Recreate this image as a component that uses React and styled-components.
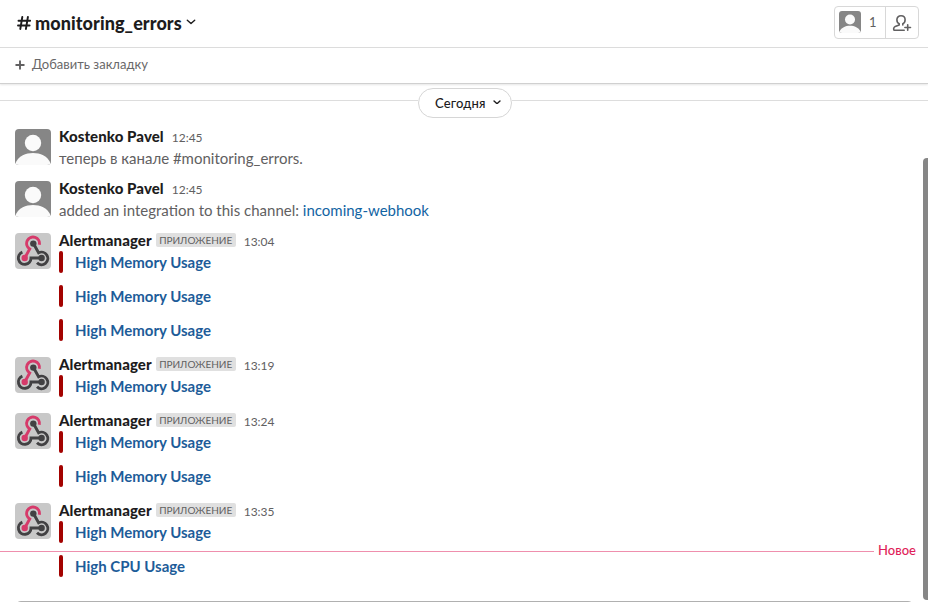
import React from "react";
import styled, { createGlobalStyle } from "styled-components";

const Global = createGlobalStyle`
  * { box-sizing: border-box; }
  body { margin: 0; background: #fff; overflow: hidden; }
`;

const Channel = styled.div`
  position: relative;
  display: flex;
  flex-direction: column;
  width: 928px;
  height: 602px;
  overflow: hidden;
  background: #fff;
  color: #1d1c1d;
  font: 15px/22px Lato, "Noto Sans", sans-serif;
`;

const Header = styled.header`
  display: flex;
  align-items: center;
  justify-content: space-between;
  flex: none;
  height: 48px;
  padding: 0 9px 2px 17px;
  border-bottom: 1px solid #dddddd;
`;

const Title = styled.h1`
  display: flex;
  align-items: center;
  margin: 0;
  font-size: 18px;
  line-height: 24px;
  font-weight: 900;
  letter-spacing: 0.08px;

  .hash { margin-right: 4px; }
  .caret { margin: 0 0 1px 4px; }
`;

const Members = styled.div`
  display: flex;
  width: 85px;
  height: 33px;
  border: 1px solid #d8d8d8;
  border-radius: 4px;
`;

const MemberCount = styled.button`
  display: flex;
  align-items: center;
  width: 51px;
  padding: 0 0 2px 4px;
  gap: 8px;
  border: 0;
  border-right: 1px solid #d8d8d8;
  background: none;
  color: #616061;
  font: 13px/20px Lato, sans-serif;
`;

const AddMember = styled.button`
  display: flex;
  align-items: center;
  justify-content: center;
  flex: 1;
  padding: 0;
  border: 0;
  background: none;
`;

const Bookmarks = styled.div`
  display: flex;
  align-items: center;
  flex: none;
  height: 36px;
  padding: 0 15px 3px;
  gap: 7px;
  border-bottom: 1px solid #d0d0d0;
  box-shadow: 0 1px 2px rgba(0, 0, 0, 0.1);
  color: #696869;
  font-size: 13px;

  svg { margin-top: 2px; }
`;

const DayDivider = styled.div`
  display: flex;
  align-items: center;
  flex: none;
  height: 30px;
  margin-top: 4px;

  &::before, &::after {
    content: "";
    flex: 1;
    height: 1px;
    margin-bottom: 5px;
    background: #dddddd;
  }
  &::before { flex: 0 0 418px; }
`;

const DayPill = styled.button`
  display: flex;
  align-items: center;
  width: 94px;
  height: 30px;
  padding: 0 0 0 16px;
  border: 1px solid #d6d6d6;
  border-radius: 15px;
  background: #fff;
  color: #1d1c1d;
  font: 500 13px/20px Lato, sans-serif;
  letter-spacing: 0.15px;

  svg { margin: 0 10px 2px auto; }
`;

const Messages = styled.main`
  padding: 7px 15px 0;
`;

const Row = styled.article`
  display: flex;
  gap: 8px;
  margin-bottom: ${(p) => (p.$alerts ? 0 : 8)}px;
`;

const Avatar = styled.svg`
  flex: none;
  display: block;
  width: ${(p) => p.$size || 36}px;
  height: ${(p) => p.$size || 36}px;
  margin-top: ${(p) => (p.$size ? 0 : 4)}px;
  border-radius: ${(p) => (p.$size ? 3 : 4)}px;
`;

const Content = styled.div`
  min-width: 0;
`;

const Meta = styled.div`
  display: flex;
  align-items: baseline;
  height: 22px;
`;

const Name = styled.span`
  font-weight: 900;
  letter-spacing: 0.08px;
`;

const AppBadge = styled.span`
  align-self: flex-start;
  width: 80px;
  height: 14px;
  margin: 4px 0 0 4px;
  border-radius: 2px;
  background: #e0e0e0;
  color: #616061;
  font-size: 10px;
  line-height: 14px;
  text-align: center;
`;

const Time = styled.time`
  margin-left: 8px;
  color: #616061;
  font-size: 12px;
`;

const Body = styled.div`
  height: 22px;
  color: #616061;
`;

const Link = styled.a`
  color: #1264a3;
`;

const Alert = styled.div`
  display: flex;
  height: 22px;
  margin-bottom: 12px;
  gap: 12px;
  font-weight: 700;
  color: #1d5c99;

  &::before {
    content: "";
    width: 4px;
    height: 22px;
    border-radius: 2px;
    background: #a30200;
  }
`;

const NewMarker = styled.div`
  position: absolute;
  top: 539px;
  left: 0;
  display: flex;
  align-items: center;
  width: 916px;
  height: 22px;
  gap: 4px;
  color: #e01e5a;
  font-size: 13px;
  font-weight: 500;

  &::before {
    content: "";
    flex: 1;
    height: 1px;
    margin-top: 3px;
    background: #ef8fad;
  }
`;

const Scrollbar = styled.div`
  position: absolute;
  top: 158px;
  right: -3px;
  width: 8px;
  height: 442px;
  border-radius: 4px;
  background: #868686;
`;

const Composer = styled.div`
  position: absolute;
  top: 601px;
  left: 15px;
  width: 899px;
  height: 20px;
  border: 1px solid #b0b0b0;
  border-radius: 6px;
`;

function Chevron({ className, width = 10, stroke = 1.4 }) {
  return (
    <svg className={className} width={width} height={width * 0.6} viewBox="0 0 10 6" fill="none">
      <path d="M1.3 1.2 5 4.6l3.7-3.4" stroke="#1d1c1d" strokeWidth={stroke} strokeLinecap="round" strokeLinejoin="round" />
    </svg>
  );
}

function Person({ size }) {
  return (
    <Avatar $size={size} viewBox="0 0 36 36">
      <rect width="36" height="36" fill="#868686" />
      <circle cx="18" cy="14" r="8.2" fill="#fafafa" />
      <path d="M1 36v-3C4 27 10.500 24 18 24s14 3 17 9v3z" fill="#fafafa" />
    </Avatar>
  );
}

function Webhook() {
  return (
    <Avatar viewBox="0 0 36 36" fill="none">
      <rect width="36" height="36" fill="#c8c8c8" />
      <g strokeWidth="2.900">
        <path d="M24.300 11.800A6.400 6.400 0 1 0 14.700 15.900L10 24.500" stroke="#d63a6a" />
        <path d="M18.300 10.300 23.600 19.800A6.300 6.300 0 1 1 22 29.800" stroke="#424143" />
        <path d="M7.400 19.200A6.300 6.300 0 1 0 16 25H26.700" stroke="#424143" />
      </g>
      <circle cx="18.300" cy="10.600" r="3.200" fill="#424143" />
      <circle cx="9.700" cy="25" r="3.200" fill="#d63a6a" />
      <circle cx="26.600" cy="25" r="3.200" fill="#424143" />
    </Avatar>
  );
}

function Message({ name, time, alerts, children }) {
  return (
    <Row $alerts={!!alerts}>
      {alerts ? <Webhook /> : <Person />}
      <Content>
        <Meta>
          <Name>{name}</Name>
          {alerts && <AppBadge>ПРИЛОЖЕНИЕ</AppBadge>}
          <Time>{time}</Time>
        </Meta>
        {alerts ? alerts.map((text, i) => <Alert key={i}>{text}</Alert>) : <Body>{children}</Body>}
      </Content>
    </Row>
  );
}

const MEMORY = "High Memory Usage";
const REPORTS = [
  { time: "13:04", alerts: [MEMORY, MEMORY, MEMORY] },
  { time: "13:19", alerts: [MEMORY] },
  { time: "13:24", alerts: [MEMORY, MEMORY] },
  { time: "13:35", alerts: [MEMORY, "High CPU Usage"] },
];

export default function App() {
  return (
    <Channel>
      <Global />
      <Header>
        <Title>
          <svg className="hash" width="14" height="16" viewBox="0 0 14 16" fill="none" stroke="#1d1c1d" strokeWidth="1.900" strokeLinecap="round">
            <path d="M5.300 2 3.300 14M10.900 2 8.900 14M1.500 5.700H13.200M1 10.500H12.600" />
          </svg>
          monitoring_errors
          <Chevron className="caret" />
        </Title>
        <Members>
          <MemberCount>
            <Person size={22} />1
          </MemberCount>
          <AddMember>
            <svg width="20" height="18" viewBox="0 0 20 18" fill="none" stroke="#616061" strokeWidth="1.600" strokeLinecap="round" strokeLinejoin="round">
              <path d="M12.200 16.300H2.600C1.200 16.300 1.300 13.300 3.200 12.400L7.200 10.900V9.800C5.700 9.200 4.900 7.700 4.900 5.800 4.900 3.400 6.600 1.800 9 1.800s4.100 1.600 4.100 4c0 1.900-.8 3.400-2.300 4V11" />
              <path d="M12.900 13.500H18.500M15.700 10.700V16.300" />
            </svg>
          </AddMember>
        </Members>
      </Header>
      <Bookmarks>
        <svg width="10" height="10" viewBox="0 0 10 10" stroke="#616061" strokeWidth="1.900" strokeLinecap="round">
          <path d="M5 1.200V8.800M1.200 5H8.800" />
        </svg>
        Добавить закладку
      </Bookmarks>
      <DayDivider>
        <DayPill>
          Сегодня
          <Chevron width={8} stroke={1.800} />
        </DayPill>
      </DayDivider>
      <Messages>
        <Message name="Kostenko Pavel" time="12:45">теперь в канале #monitoring_errors.</Message>
        <Message name="Kostenko Pavel" time="12:45">
          added an integration to this channel: <Link>incoming-webhook</Link>
        </Message>
        {REPORTS.map((r) => (
          <Message key={r.time} name="Alertmanager" {...r} />
        ))}
      </Messages>
      <NewMarker>Новое</NewMarker>
      <Scrollbar />
      <Composer />
    </Channel>
  );
}
